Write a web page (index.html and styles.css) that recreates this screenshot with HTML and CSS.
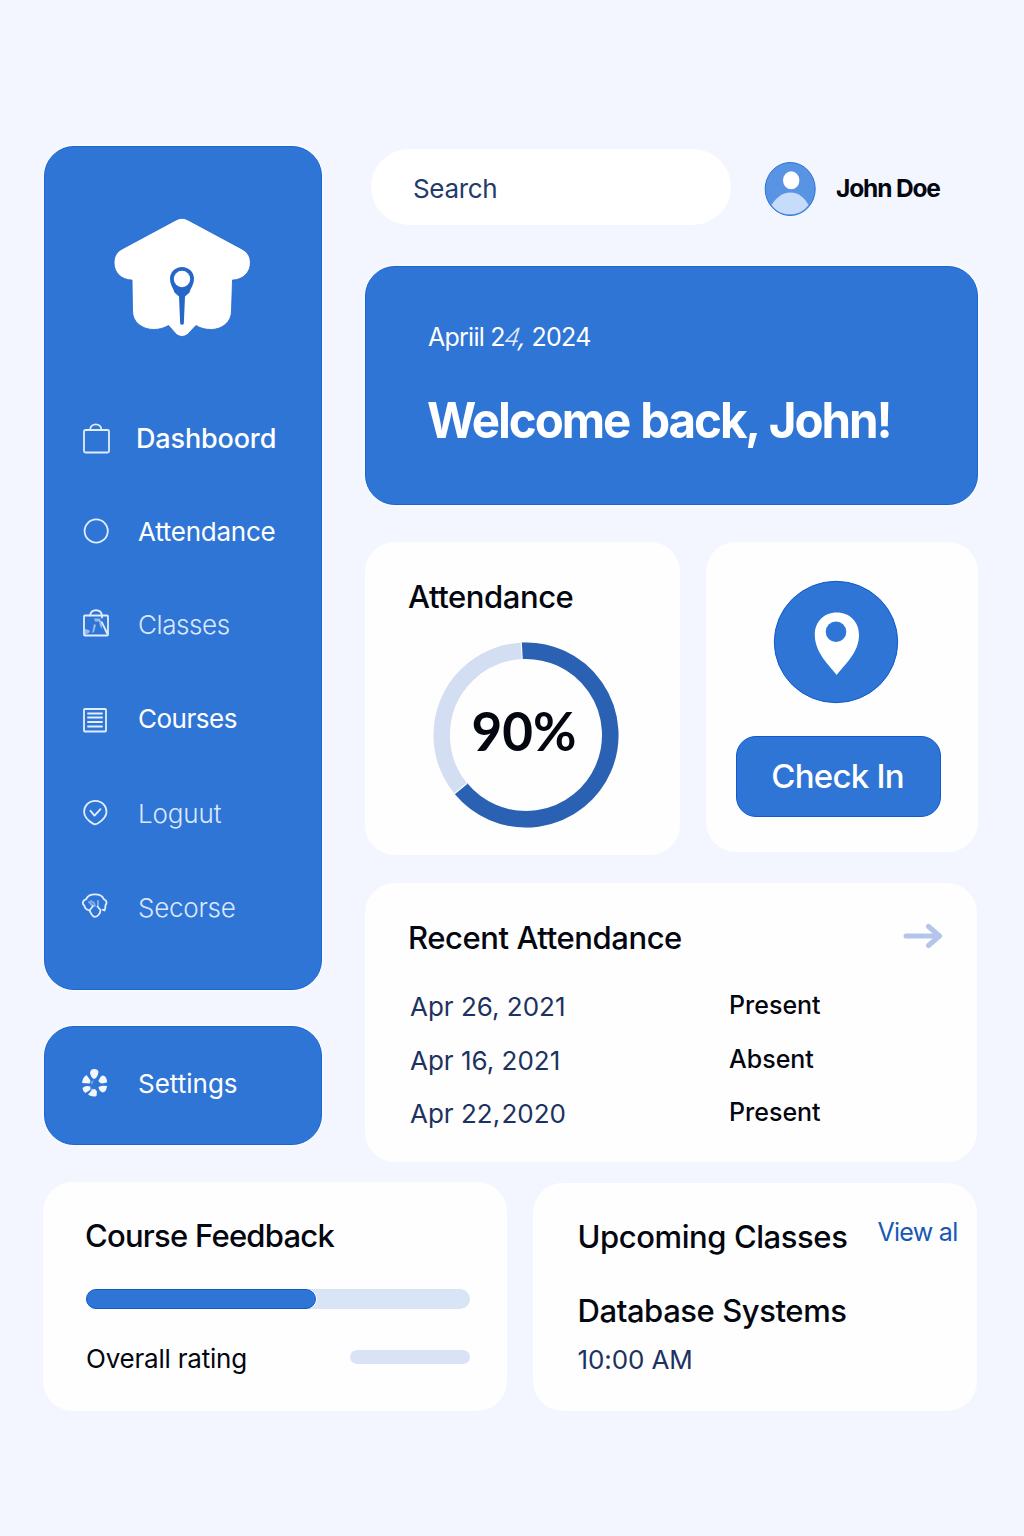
FILE: index.html
```html
<!DOCTYPE html>
<html lang="en">
<head>
<meta charset="utf-8">
<title>Student Dashboard</title>
<link rel="stylesheet" href="styles.css">
</head>
<body>
<div class="page">
  <div class="top">
    <div class="left">
      <aside class="sidebar">
        <svg class="logo" viewBox="0 0 140 122" width="140" height="122">
          <path fill="#fff" stroke="#1e62cc" stroke-width=".8" d="M64 4Q70 .500 76 4L130 33C137 37 138.400 42 138.400 47C138.400 56 131 64 120.500 64L119.500 95C119.500 106 110 113.500 99 113.500C93 113.500 88 112 84 109.500L75.500 118.500Q70 122.500 64.500 118.500L56.500 109.500C52 112 47 113.500 42 113.500C30 113.500 20.500 106 20.500 95L20 64C9 64 2 56 2 47C2 41 4 36.500 10 33Z"/>
          <path fill="#2467c9" d="M70 51C76.500 51 82 56 82 62.500C82 68.500 79 71.500 77.500 76.500L73 80.500L71.800 108Q70 109.300 68.200 108L67 80.500L62.500 76.500C61 71.500 58 68.500 58 62.500C58 56 63.500 51 70 51Z"/>
          <circle cx="70" cy="63" r="8.200" fill="#fff"/>
        </svg>
        <nav class="nav">
          <a class="item strong"><svg class="icon" viewBox="0 0 28 32" width="28" height="32"><rect x="2" y="7" width="25" height="22.500" rx="1.500"/><path d="M8 7C8.500 -.500 19 -.500 19.500 7"/></svg><span>Dashboord</span></a>
          <a class="item"><svg class="icon" viewBox="0 0 28 32" width="28" height="32"><circle cx="14.200" cy="16" r="11.600"/></svg><span class="t-att">Attendance</span></a>
          <a class="item faint"><svg class="icon" viewBox="0 0 28 32" width="28" height="32"><rect x="2" y="6.500" width="24" height="20" rx="1"/><path d="M8 6.500C9 -.500 19 -.500 20 6.500V8.500M20 13.500l5 11"/><g class="smudge"><path d="M12 9.500h6l1 3h-6z"/><path d="M17 12h3v8l-2-3z"/><path d="M12 15l2 1-2 7-2 1z"/><path d="M3 20l4 1 1 2-5 3z"/><path d="M21 14l4 7v4z"/></g></svg><span class="t-cls">Classes</span></a>
          <a class="item"><svg class="icon" viewBox="0 0 28 32" width="28" height="32"><rect x="2" y="6" width="22" height="22.500" rx="1"/><path d="M6 10.500h14M6 14.500h14M6 19h14M6 23.500h14"/></svg><span class="t-crs">Courses</span></a>
          <a class="item faint"><svg class="icon" viewBox="0 0 28 32" width="28" height="32"><path d="M13.300 2.800C20 2.800 24.500 7.800 24.500 13.800C24.500 20.300 19 23.300 15.500 25.600Q13.300 26.900 11 25.600C7 23.300 2.100 20.300 2.100 13.800C2.100 7.800 6.600 2.800 13.300 2.800Z"/><path d="M8.500 12.800l4 4.800 6-6.500"/></svg><span class="t-log">Loguut</span></a>
          <a class="item faint"><svg class="icon" viewBox="0 0 28 32" width="28" height="32"><path d="M4 7.300C7 .700 19 .700 22 7.300C24 7.800 25.400 10.500 23.800 12.600C22.800 14 24 16 22.500 18.500L20.800 17.600M4 7.300C1.500 7.500 -.200 11 1.800 13C3 14.500 2.800 17 5 17.500L7.500 18.500C9 21 10 24.800 13 24.800C16 24.800 18.500 21 18.500 18L15.500 14.500M7.500 18.500L11 14"/><path opacity=".5" d="M7 10l4 4M9 9l3 2 1 3M16 9v5"/></svg><span class="t-sec">Secorse</span></a>
        </nav>
      </aside>
      <a class="settings">
        <svg class="gear" viewBox="0 0 28 30" width="28" height="30"><path d="M9 5Q9.500 1 13 1Q17 1 17.500 4Q16.500 10 13 11Q10 10 9 5Z"/><path d="M19.500 9Q21 6.500 23.500 8Q26.500 11 26 14.500L21 15.500Q17.500 14.500 17.500 12.500Z"/><path d="M17.500 19Q21 17 26 18Q25.500 23.500 22 24.500Q18 23.500 17.500 19Z"/><path d="M11.500 21.500Q14 20 16 23.500L15.500 28Q11 29.500 7 26.500Z"/><path d="M1.500 20Q4.500 17 9.500 18.500L9 22 4.500 25Q1.500 23 1.500 20Z"/><path d="M1 15Q1.500 9.500 5.500 7L9.500 12.500 8.500 15.500Z"/><path opacity=".35" d="M9 14l4-2-2 5zM9 20l4 1-3 3z"/></svg>
        <span class="t-set">Settings</span>
      </a>
    </div>

    <main class="right">
      <header class="topbar">
        <div class="search">Search</div>
        <svg class="avatar" viewBox="0 0 52 56" width="52" height="56">
          <ellipse cx="26.200" cy="28" rx="25" ry="26.500" fill="#5994e4" stroke="#2b74d8" stroke-width="1"/>
          <ellipse cx="27.200" cy="19.300" rx="8.200" ry="9" fill="#fff"/>
          <path d="M7.500 44C12 37 18 31.500 26.500 31.500C35 31.500 40.500 37 44.500 44C40 50 34 53.300 26 53.300C18 53.300 12 50 7.500 44Z" fill="#c7dbfb"/>
        </svg>
        <span class="user">John Doe</span>
      </header>

      <section class="hero">
        <div class="date">Apriil 2<span class="slant"><span class="thin">4</span>,</span> 2024</div>
        <h1>Welcome back, John!</h1>
      </section>

      <div class="pair">
        <section class="card attendance">
          <h2>Attendance</h2>
          <div class="ring">
            <svg viewBox="0 0 186 186" width="186" height="186">
              <circle cx="93" cy="93" r="84.300" fill="none" stroke="#d3def2" stroke-width="16.500"/>
              <path d="M88.600 8.800A84.300 84.300 0 1 1 27.900 146.600" fill="none" stroke="#2a61b3" stroke-width="16.500"/>
              <path d="M88.200 .500l1 17M21.400 151.800l12.500-10.300" stroke="#fff" stroke-width="1.200"/>
            </svg>
            <span class="percent">90%</span>
          </div>
        </section>
        <section class="card checkin">
          <svg viewBox="0 0 126 124" width="126" height="124">
            <ellipse cx="63" cy="62" rx="61.700" ry="60.700" fill="#2f75d6" stroke="#0f5bcd"/>
            <path fill="#fff" d="M63.700 95C57 86 41.800 73 41.800 55C41.800 42 50.500 32.500 63.700 32.500C77 32.500 86 42 86 55C86 73 71 85 63.700 95Z"/>
            <circle cx="63" cy="51.700" r="10.300" fill="#2f75d6"/>
          </svg>
          <button class="btn">Check In</button>
        </section>
      </div>

      <section class="card recent">
        <div class="recent-head">
          <h2>Recent Attendance</h2>
          <svg viewBox="0 0 40 26" width="40" height="26"><path d="M3 13H36M25.500 3.500L36.500 13L25.500 22.500" fill="none" stroke="#b4c5e9" stroke-width="5" stroke-linecap="round" stroke-linejoin="round"/></svg>
        </div>
        <div class="rec"><span>Apr 26, 2021</span><b>Present</b></div>
        <div class="rec"><span>Apr 16, 2021</span><b>Absent</b></div>
        <div class="rec"><span>Apr 22<span class="tight">, </span>2020</span><b>Present</b></div>
      </section>
    </main>
  </div>

  <div class="bottom">
    <section class="card feedback">
      <h2>Course Feedback</h2>
      <div class="bar"><div class="fill" style="width:229.500px"></div></div>
      <div class="rating"><span>Overall rating</span><div class="mini"></div></div>
    </section>
    <section class="card upcoming">
      <div class="up-head"><h2>Upcoming Classes</h2><a class="view">View al</a></div>
      <h2>Database Systems</h2>
      <div class="time">10:00 AM</div>
    </section>
  </div>
</div>
</body>
</html>
```
FILE: styles.css
```css
* { box-sizing: border-box; }
body {
  margin: 0;
  background: #f3f6fe;
  font-family: Inter, "Liberation Sans", sans-serif;
  color: #04070f;
  white-space: nowrap;
}
.page { width: 1024px; height: 1536px; padding: 146px 46px 0 43px; }
.top { display: flex; gap: 43px; padding-left: 1px; height: 1036px; }
.left { width: 278px; display: flex; flex-direction: column; gap: 36px; }
.sidebar, .settings, .hero { background: #2f75d6; border: 1px solid #1a66d2; box-shadow: 0 0 3px 1px #fafcff; color: #fff; }
.sidebar { height: 844px; border-radius: 30px; padding: 69px 0 0 37px; }
.logo { display: block; margin-left: 30px; }
.nav { display: grid; grid-template-rows: 93px 92px 96px 91px 99px 90px; margin-top: 54px; }
.item { display: flex; align-items: center; gap: 28px; font-size: 26px; letter-spacing: -.25px; }
.strong { font-weight: 500; font-size: 27px; gap: 26px; letter-spacing: -.15px; }
.faint { color: #dbe8fc; font-weight: 350; }
.t-cls, .t-log, .t-sec { margin-top: -1px; }
.t-cls { letter-spacing: -.4px; }
.t-crs { letter-spacing: -.5px; }
.t-log { letter-spacing: -.15px; }
.t-sec { letter-spacing: -.25px; }
.icon { flex: none; fill: none; stroke: #e2edfd; stroke-width: 1.800; stroke-linecap: round; stroke-linejoin: round; }
.smudge { fill: #dce9fc; stroke: none; opacity: .6; }
.settings { height: 119px; border-radius: 30px; padding: 0 0 5px 36px; display: flex; align-items: center; gap: 29px; font-size: 26px; }
.gear { fill: #f2f7ff; }

.right { width: 613px; }
.topbar { display: flex; align-items: center; height: 76px; margin: 3px 0 0 6px; }
.search { width: 360px; height: 76px; line-height: 79px; border-radius: 38px; background: #fff; padding-left: 42px; font-size: 26px; letter-spacing: -.35px; color: #233a6b; }
.avatar { margin: 4px 0 0 33px; }
.user { margin: 2px 0 0 20px; font-size: 24.500px; font-weight: 650; letter-spacing: -1.150px; }
.hero { height: 239px; margin-top: 41px; border-radius: 30px; padding: 51px 0 0 62px; }
.date { font-size: 25px; line-height: 38px; letter-spacing: -.75px; }
.slant { display: inline-block; transform: skewX(-18deg); margin-right: -1px; }
.thin { font-weight: 300; opacity: .85; }
h1 { margin: 34px 0 0 -1px; font-size: 50px; line-height: 60px; font-weight: 650; letter-spacing: -2.200px; word-spacing: 2px; transform: scaleX(.95); transform-origin: left; }
h2 { margin: 0; font-size: 31px; line-height: 40px; font-weight: 500; letter-spacing: -.42px; }
.card { background: #fefeff; border-radius: 30px; }
.pair { display: flex; gap: 26px; margin-top: 37px; }
.attendance { width: 315px; height: 313px; padding: 35px 0 0 43px; }
.ring { display: grid; place-items: center; width: 186px; height: 186px; margin: 25px 0 0 25px; }
.ring > * { grid-area: 1 / 1; }
.percent { font: 700 53px Lato, sans-serif; padding: 0 4px 9px 0; }
.checkin { width: 272px; height: 310px; padding-top: 38px; display: flex; flex-direction: column; align-items: center; padding-right: 8px; }
.checkin svg { margin-right: 3.500px; }
.btn { width: 205px; height: 81px; margin-top: 32px; border: 1px solid #0f5bcd; border-radius: 20px; background: #2f75d6; color: #fff; font: 500 33px Inter, sans-serif; letter-spacing: -.75px; padding: 0 1px 2px 0; }
.recent { height: 279px; margin-top: 28px; padding: 35px 34px 0 43px; width: 612px; }
.recent-head { display: flex; justify-content: space-between; align-items: center; height: 40px; margin-bottom: 22px; }
.recent-head svg { margin-top: -5px; }
.rec { display: grid; grid-template-columns: 319px 1fr; height: 53.500px; align-items: center; font-size: 26px; color: #1d3260; padding-left: 2px; }
.rec b { font-size: 25px; font-weight: 500; color: #04070f; margin-top: -3px; }
.tight { letter-spacing: -3px; }

.bottom { display: flex; gap: 26px; }
.feedback { width: 464px; height: 229px; padding: 34px 37px 0 43px; }
.feedback h2 { letter-spacing: -.75px; margin-left: -1px; }
.bar { height: 20px; margin-top: 33px; border-radius: 10px; background: #d9e4f6; }
.fill { height: 20px; border-radius: 10px; background: #2f75d6; border: 1px solid #0f5bcd; box-shadow: 1px 0 0 #fff; }
.rating { display: flex; justify-content: space-between; align-items: center; margin-top: 29px; height: 40px; font-size: 26px; letter-spacing: -.22px; }
.mini { width: 120px; height: 14px; border-radius: 7px; background: #d9e3f5; margin-top: -3px; }
.upcoming { width: 444px; height: 228px; margin-top: 1px; padding: 34px 0 0 44.500px; }
.up-head { display: flex; height: 40px; margin-bottom: 34px; }
.view { margin-left: 30px; font-size: 25px; line-height: 31px; letter-spacing: -.7px; color: #1659b5; }
.time { font-size: 26px; line-height: 40px; margin-top: 9px; letter-spacing: -.1px; color: #1d3260; }
```
